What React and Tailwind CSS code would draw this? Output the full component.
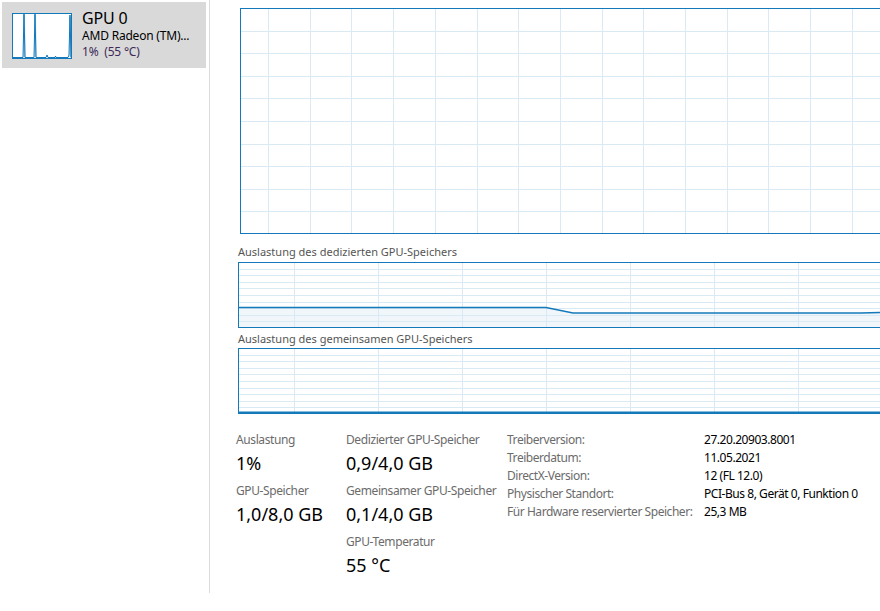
import React from 'react'

const BLUE = '#1479bb'
const GRID = '#d9eaf4'

function Grid({ w, h, rows, xs }) {
  const lines = []
  for (let k = 1; k < rows; k++) {
    const y = Math.round((h / rows) * k) + 0.5
    lines.push(<line key={'h' + k} x1="0" x2={w} y1={y} y2={y} stroke={GRID} strokeWidth="1" />)
  }
  xs.forEach((x, i) => {
    const xx = Math.round(x) + 0.5
    lines.push(<line key={'v' + i} x1={xx} x2={xx} y1="0" y2={h} stroke={GRID} strokeWidth="1" />)
  })
  return <>{lines}</>
}

function MainChart() {
  const w = 660
  const h = 226
  const xs = []
  for (let x = 28; x < w; x += 41.7) xs.push(x)
  return (
    <svg width={w} height={h} className="block">
      <Grid w={w} h={h} rows={10} xs={xs} />
      <rect x="0.5" y="0.5" width={w - 1} height={h - 1} fill="none" stroke={BLUE} strokeWidth="1" />
    </svg>
  )
}

function MemChart({ line, fill }) {
  const w = 660
  const h = 66
  const xs = []
  for (let x = 56; x < w; x += 84) xs.push(x)
  return (
    <svg width={w} height={h} className="block">
      {fill && <path d={fill} fill="#f1f6fa" />}
      <Grid w={w} h={h} rows={10} xs={xs} />
      {line}
      <rect x="0.5" y="0.5" width={w - 1} height={h - 1} fill="none" stroke={BLUE} strokeWidth="1" />
    </svg>
  )
}

function Thumb() {
  return (
    <svg width="60" height="46" className="block shrink-0">
      <rect x="0" y="0" width="60" height="46" fill="#ffffff" />
      <path d="M12 2 L12.5 44 M23 2 L23.5 44 M58 4 L58.5 44" stroke="#a9cfe9" strokeWidth="2" />
      <path
        d="M1 44.5 L11 44.5 L12 1 L13 44.5 L22 44.5 L23 1 L24 44.5 L34 44.5 L35 42 L36 44.5 L43 44.5 L43.5 43 L44 44.5 L56 44.5 L57 42 L58 2 L59 44.5"
        fill="none"
        stroke={BLUE}
        strokeWidth="1"
      />
      <rect x="0.5" y="0.5" width="59" height="45" fill="none" stroke={BLUE} strokeWidth="1" />
    </svg>
  )
}

function Stat({ label, value }) {
  return (
    <div className="mb-[8px]">
      <div className="text-[12px] leading-[16px] tracking-[-0.4px] text-[#6b6b6b] whitespace-nowrap">{label}</div>
      <div className="mt-[3px] text-[18px] leading-[24px] text-black whitespace-nowrap">{value}</div>
    </div>
  )
}

const infos = [
  ['Treiberversion:', '27.20.20903.8001'],
  ['Treiberdatum:', '11.05.2021'],
  ['DirectX-Version:', '12 (FL 12.0)'],
  ['Physischer Standort:', 'PCI-Bus 8, Gerät 0, Funktion 0'],
  ['Für Hardware reservierter Speicher:', '25,3 MB'],
]

export default function App() {
  return (
    <div className="flex w-[880px] h-[611px] overflow-hidden bg-white font-['Noto_Sans',sans-serif]">
      <aside className="w-[210px] shrink-0 border-r border-[#dcdcdc] pt-[2px] pl-[2px] h-[593px]">
        <div className="w-[204px] h-[66px] bg-[#d9d9d9] flex items-start pl-[10px] pt-[6px] gap-[10px]">
          <div className="mt-[5px]">
            <Thumb />
          </div>
          <div className="tracking-[-0.2px]">
            <div className="text-[16px] leading-[20px] text-black">GPU 0</div>
            <div className="text-[12px] leading-[16px] text-black whitespace-nowrap">AMD Radeon (TM)...</div>
            <div className="text-[12px] leading-[15px] text-[#3e2a58] whitespace-nowrap">1%&nbsp; (55 °C)</div>
          </div>
        </div>
      </aside>

      <main className="flex-1 min-w-0 overflow-hidden pl-[28px] pt-[8px]">
        <div className="ml-[2px]">
          <MainChart />
        </div>

        <div className="mt-[10px] text-[11px] leading-[16px] text-[#555]">Auslastung des dedizierten GPU-Speichers</div>
        <div className="mt-[2px]">
          <MemChart
            fill="M0 46 L308 46 L335 51 L623 51 L660 50 L660 66 L0 66 Z"
            line={<path d="M0 45.5 L308 45.5 L335 51 L623 51 L660 50" fill="none" stroke={BLUE} strokeWidth="1.5" />}
          />
        </div>

        <div className="mt-[3px] text-[11px] leading-[16px] text-[#555]">Auslastung des gemeinsamen GPU-Speichers</div>
        <div className="mt-[1px]">
          <MemChart line={<path d="M0 64.5 L660 64.5" fill="none" stroke={BLUE} strokeWidth="2" />} />
        </div>

        <div className="mt-[18px] -ml-[2px] flex">
          <div className="w-[110px]">
            <Stat label="Auslastung" value="1%" />
            <Stat label="GPU-Speicher" value="1,0/8,0 GB" />
          </div>
          <div className="w-[161px]">
            <Stat label="Dedizierter GPU-Speicher" value="0,9/4,0 GB" />
            <Stat label="Gemeinsamer GPU-Speicher" value="0,1/4,0 GB" />
            <Stat label="GPU-Temperatur" value="55 °C" />
          </div>
          <div className="-mt-[1px] tracking-[-0.45px]">
            {infos.map(([k, v]) => (
              <div key={k} className="flex text-[12px] leading-[18px] whitespace-nowrap">
                <div className="w-[197px] text-[#6b6b6b]">{k}</div>
                <div className="text-black">{v}</div>
              </div>
            ))}
          </div>
        </div>
      </main>
    </div>
  )
}
